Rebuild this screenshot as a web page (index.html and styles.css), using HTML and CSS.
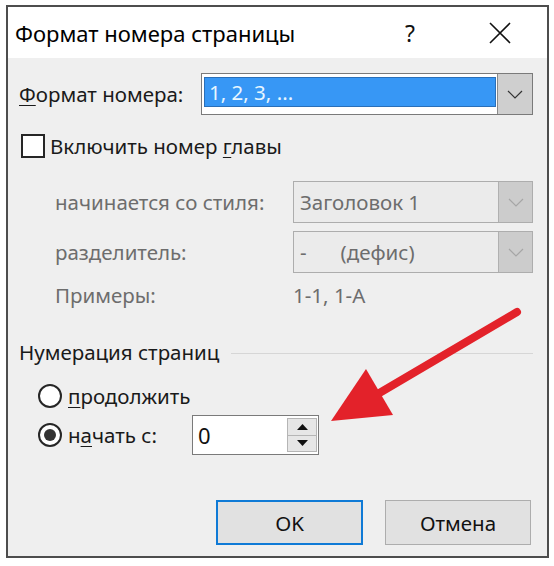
FILE: index.html
```html
<!DOCTYPE html>
<html lang="ru">
<head>
<meta charset="utf-8">
<title>Формат номера страницы</title>
<link rel="stylesheet" href="styles.css">
</head>
<body>
<div class="page">
  <div class="dialog">
    <div class="titlebar">
      <span class="title">Формат номера страницы</span>
      <span class="help">?</span>
      <span class="close">
        <svg width="22" height="22" viewBox="0 0 22 22"><path d="M1 1 L21 21 M21 1 L1 21" stroke="#111" stroke-width="1.6" fill="none"/></svg>
      </span>
    </div>
    <div class="body">
      <div class="row row-format">
        <span class="lbl lbl-format"><u>Ф</u>ормат номера:</span>
        <div class="combo combo-main">
          <div class="combo-field"><span class="sel">1, 2, 3, ...</span></div>
          <div class="combo-btn">
            <svg width="16" height="9" viewBox="0 0 16 9"><path d="M1 1 L8 8 L15 1" stroke="#333" stroke-width="1.2" fill="none"/></svg>
          </div>
        </div>
      </div>

      <div class="row row-check">
        <span class="checkbox"></span>
        <span class="lbl">Включить номер <u>г</u>лавы</span>
      </div>

      <div class="row row-sub row-sub1">
        <span class="lbl-dis lbl-sub">начинается со стиля:</span>
        <div class="combo combo-dis">
          <div class="combo-field dis-field">Заголовок 1</div>
          <div class="combo-btn dis-btn">
            <svg width="16" height="9" viewBox="0 0 16 9"><path d="M1 1 L8 8 L15 1" stroke="#a6a6a6" stroke-width="1.2" fill="none"/></svg>
          </div>
        </div>
      </div>

      <div class="row row-sub row-sub2">
        <span class="lbl-dis lbl-sub">разделитель:</span>
        <div class="combo combo-dis">
          <div class="combo-field dis-field"><span class="dash">-</span><span>(дефис)</span></div>
          <div class="combo-btn dis-btn">
            <svg width="16" height="9" viewBox="0 0 16 9"><path d="M1 1 L8 8 L15 1" stroke="#a6a6a6" stroke-width="1.2" fill="none"/></svg>
          </div>
        </div>
      </div>

      <div class="row row-sub row-examples">
        <span class="lbl-dis lbl-sub">Примеры:</span>
        <span class="lbl-dis">1-1, 1-А</span>
      </div>

      <div class="row row-group">
        <span class="lbl">Нумерация страниц</span>
        <span class="group-line"></span>
      </div>

      <div class="row row-radio row-radio1">
        <span class="radio"></span>
        <span class="lbl"><u>п</u>родолжить</span>
      </div>

      <div class="row row-radio row-radio2">
        <span class="radio radio-on"><span class="dot"></span></span>
        <span class="lbl lbl-start">н<u>а</u>чать с:</span>
        <div class="spin">
          <span class="spin-val">0</span>
          <div class="spin-btns">
            <span class="spin-btn"><svg width="11" height="6" viewBox="0 0 11 6"><path d="M0 6 L5.5 0 L11 6 Z" fill="#111"/></svg></span>
            <span class="spin-btn"><svg width="11" height="6" viewBox="0 0 11 6"><path d="M0 0 L5.5 6 L11 0 Z" fill="#111"/></svg></span>
          </div>
        </div>
      </div>

      <div class="row row-buttons">
        <span class="btn btn-ok">OK</span>
        <span class="btn btn-cancel">Отмена</span>
      </div>
    </div>
  </div>

  <svg class="arrow" width="554" height="566" viewBox="0 0 554 566">
    <line x1="517" y1="312" x2="376" y2="395" stroke="#e3222a" stroke-width="8" stroke-linecap="round"/>
    <polygon points="331,421 366,369 393,415" fill="#e3222a"/>
  </svg>
</div>
</body>
</html>
```

FILE: styles.css
```css
* { box-sizing: border-box; }
html, body { margin: 0; padding: 0; background: #fff; }
body {
  font-family: "Noto Sans", "Liberation Sans", sans-serif;
  color: #1a1a1a;
  font-size: 20.5px;
}
u { text-decoration-thickness: 1px; text-underline-offset: 3px; }

.page {
  position: relative;
  width: 554px;
  height: 566px;
  padding: 5px 0 0 6px;
}

.dialog {
  width: 543px;
  height: 553px;
  border: 2px solid #4d4d4d;
  background: #efefef;
  display: flex;
  flex-direction: column;
}

.titlebar {
  height: 51px;
  background: #fff;
  display: flex;
  align-items: center;
  padding-left: 7px;
  padding-right: 27px;
}
.title { flex: 1; font-size: 22px; color: #000; }
.help {
  width: 30px;
  text-align: center;
  font-size: 23px;
  color: #111;
  margin-right: 55px;
}
.close {
  width: 40px;
  display: flex;
  justify-content: center;
  align-items: center;
}

.body {
  flex: 1;
  display: flex;
  flex-direction: column;
  padding: 15px 14px 0 11px;
}

.row { display: flex; align-items: center; }

.row-format { height: 42px; }
.lbl-format { width: 182px; }

.combo {
  display: flex;
  height: 42px;
  border: 1px solid #7a7a7a;
  background: #fff;
}
.combo-main { width: 332px; }
.combo-field { flex: 1; }
.combo-main .combo-field {
  padding: 3px 1px 7px 2px;
  display: flex;
}
.sel {
  flex: 1;
  background: #3797f5;
  border: 1px solid #2a6fb8;
  color: #e8f6ff;
  display: flex;
  align-items: center;
  padding-left: 4px;
}
.combo-btn {
  width: 35px;
  background: #cfcfcf;
  border-left: 1px solid #8a8a8a;
  display: flex;
  align-items: center;
  justify-content: center;
}

.row-check { height: 24px; margin-top: 19px; padding-left: 2px; }
.checkbox {
  width: 24px;
  height: 24px;
  border: 2px solid #262626;
  background: #fff;
  margin-right: 5px;
}

.row-sub { padding-left: 36px; }
.lbl-sub { width: 238px; }
.lbl-dis { color: #6d6d6d; }
.row-sub1 { margin-top: 23px; }
.row-sub2 { margin-top: 8px; }
.combo-dis {
  width: 240px;
  background: #ebebeb;
  border-color: #adadad;
}
.dis-field {
  color: #6d6d6d;
  display: flex;
  align-items: center;
  padding-left: 6px;
}
.dash { margin-right: 34px; }
.dis-btn {
  width: 34px;
  background: #cccccc;
  border-left: 1px solid #b0b0b0;
}
.row-examples { height: 30px; margin-top: 7px; }

.row-group { height: 24px; margin-top: 30px; }
.group-line {
  flex: 1;
  height: 1px;
  background: #d6d6d6;
  margin-left: 12px;
  margin-top: 2px;
}

.row-radio { padding-left: 19px; }
.row-radio1 { height: 24px; margin-top: 20px; }
.row-radio2 { height: 40px; margin-top: 7px; }
.radio {
  width: 24px;
  height: 24px;
  border: 2px solid #262626;
  border-radius: 50%;
  background: #fff;
  margin-right: 6px;
  display: flex;
  align-items: center;
  justify-content: center;
}
.dot {
  width: 12px;
  height: 12px;
  border-radius: 50%;
  background: #333;
}
.lbl-start { width: 124px; }

.spin {
  width: 127px;
  height: 40px;
  border: 1px solid #7a7a7a;
  background: #fff;
  display: flex;
  align-items: center;
  padding: 2px 1px 2px 5px;
}
.spin-val { flex: 1; font-size: 22px; color: #111; }
.spin-btns {
  width: 30px;
  height: 34px;
  display: flex;
  flex-direction: column;
}
.spin-btn {
  flex: 1;
  background: #e6e6e6;
  border: 1px solid #b5b5b5;
  display: flex;
  align-items: center;
  justify-content: center;
}
.spin-btn + .spin-btn { border-top: none; }

.row-buttons {
  height: 45px;
  margin-top: 45px;
  justify-content: flex-end;
  padding-right: 2px;
  gap: 22px;
}
.btn {
  height: 45px;
  display: flex;
  align-items: center;
  justify-content: center;
  background: #e1e1e1;
  color: #111;
}
.btn-ok { width: 147px; border: 2px solid #0f7ad6; }
.btn-cancel { width: 146px; border: 1px solid #adadad; }

.arrow {
  position: absolute;
  left: 0;
  top: 0;
  pointer-events: none;
}
```
